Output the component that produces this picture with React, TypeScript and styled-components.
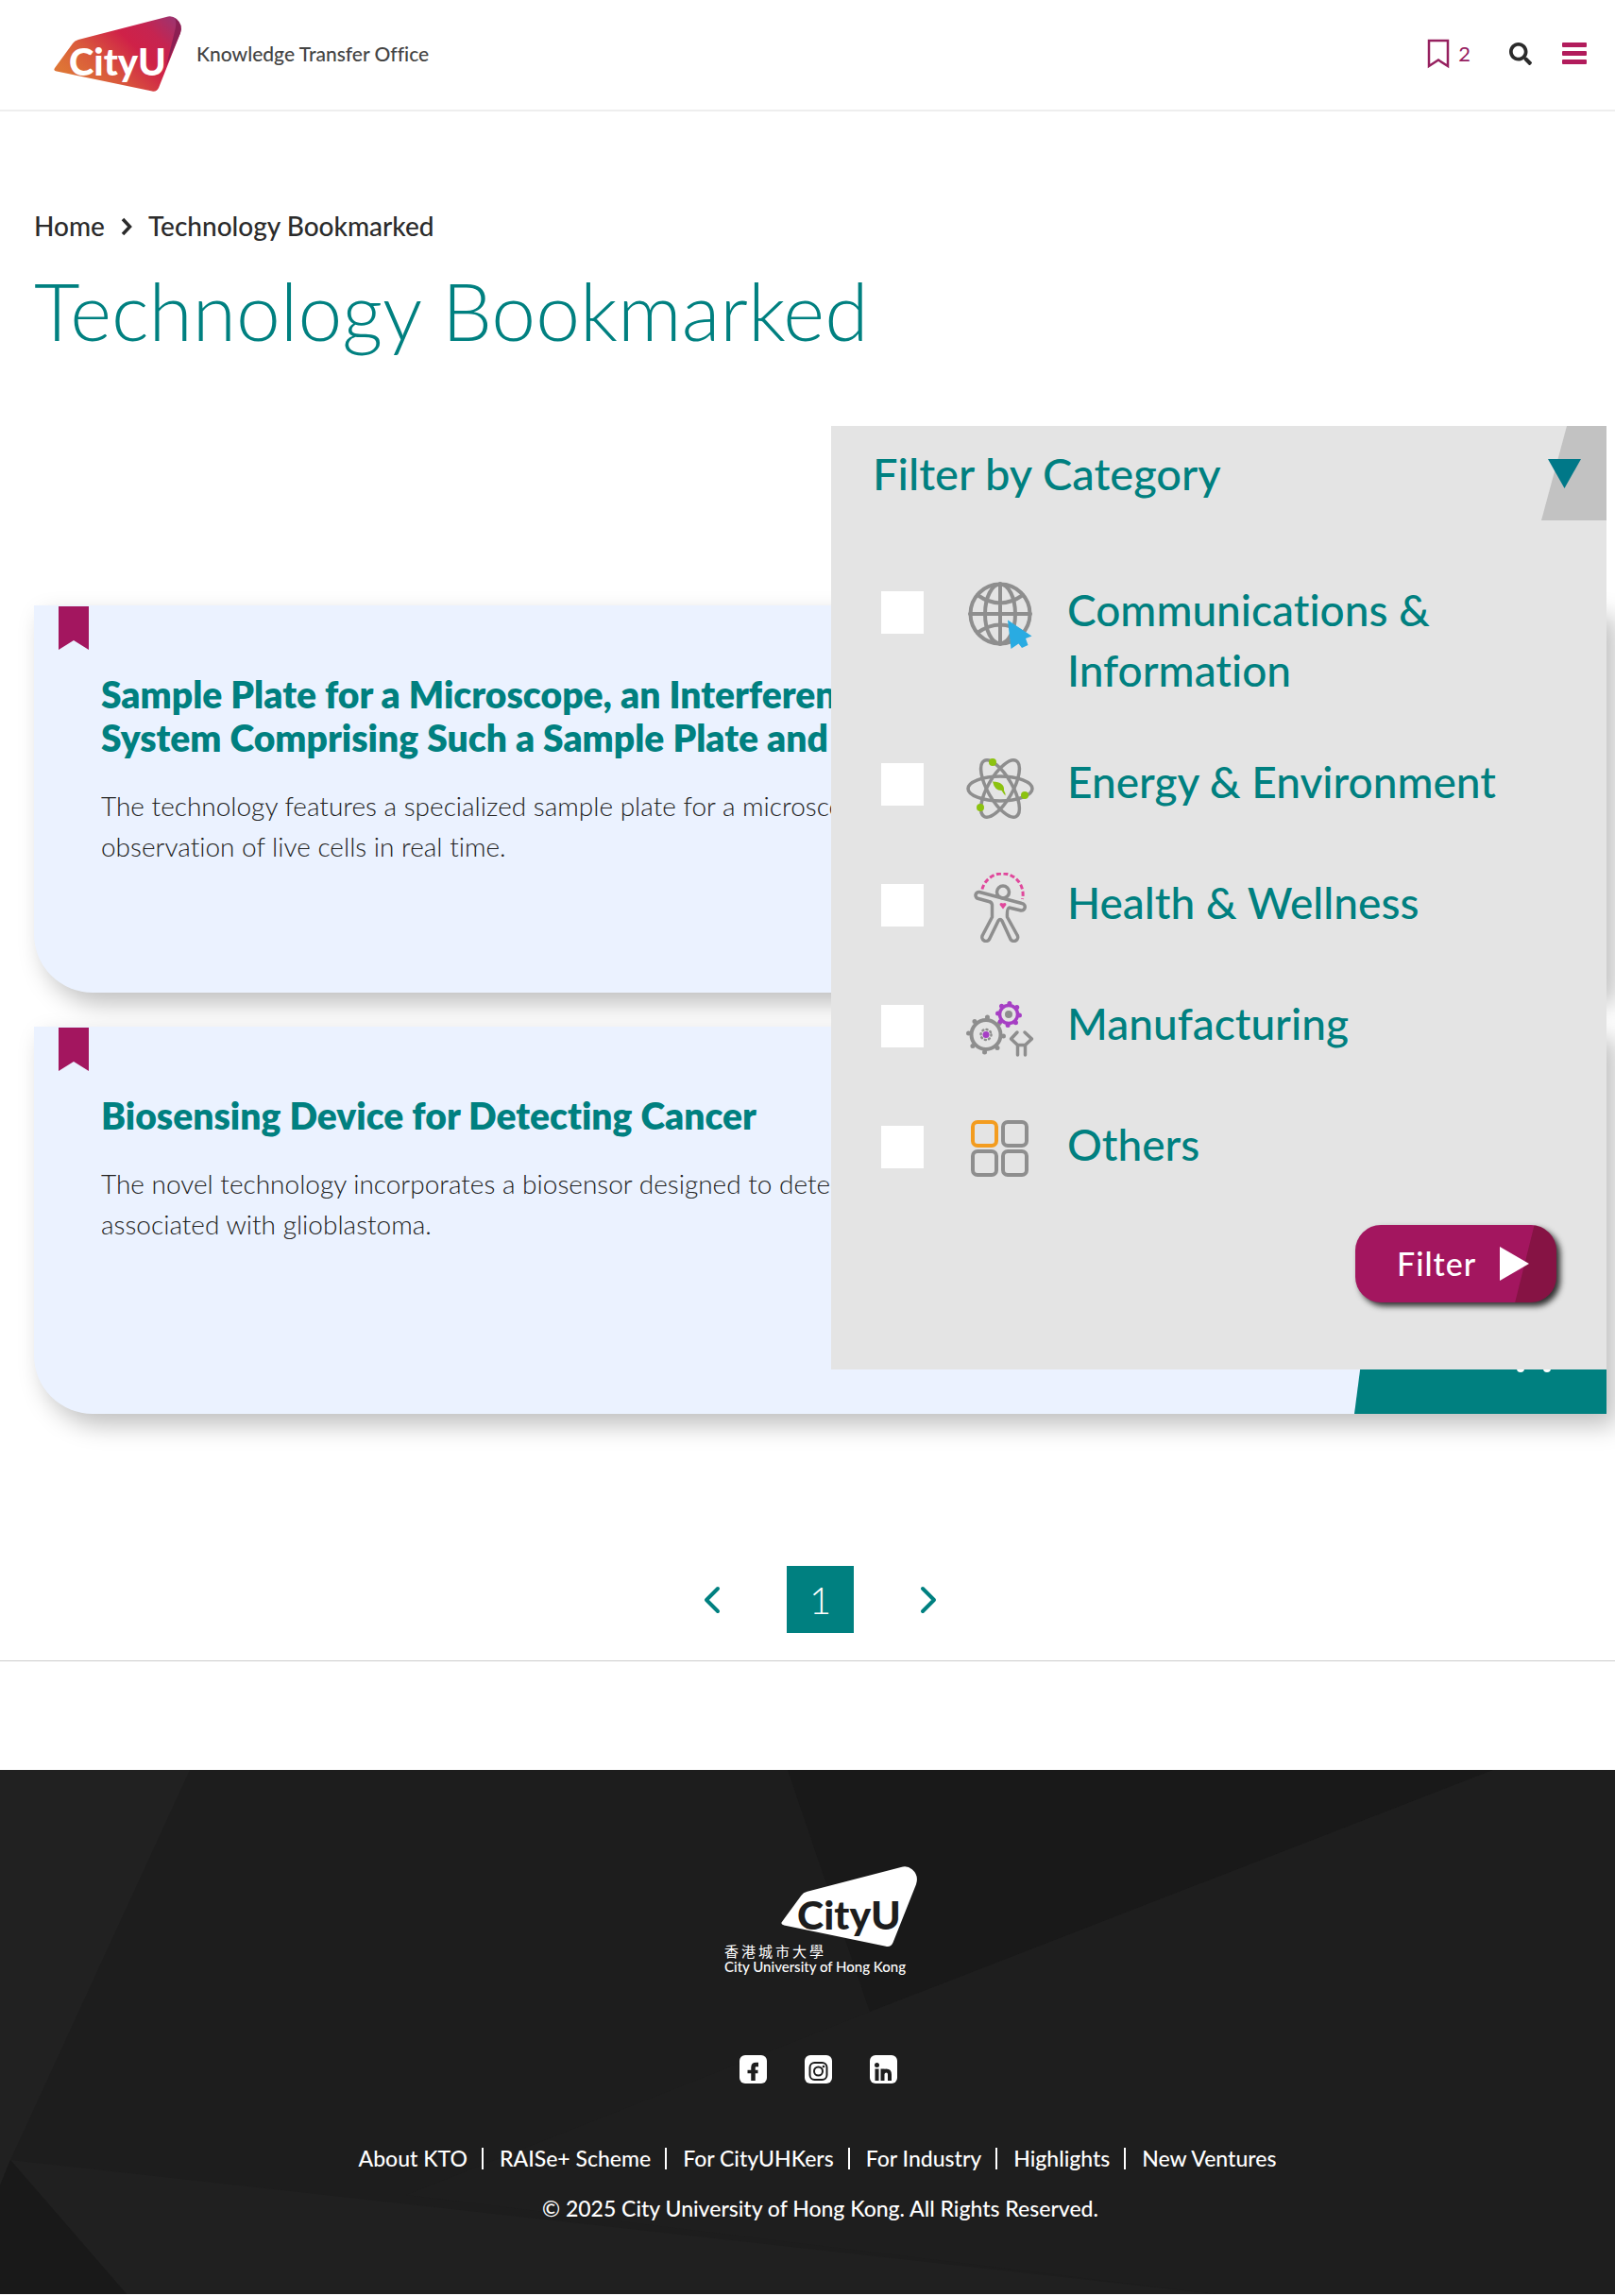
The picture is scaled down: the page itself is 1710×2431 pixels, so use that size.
import React from "react";
import styled, { createGlobalStyle } from "styled-components";
import { FaSearch } from "react-icons/fa";

const TEAL = "#008080";
const MAGENTA = "#a3165f";
const FONT = `Lato, "Noto Sans CJK TC", "Liberation Sans", sans-serif`;

const GlobalStyle = createGlobalStyle`
  *, *::before, *::after { box-sizing: border-box; }
  body {
    margin: 0;
    background: #fff;
    font-family: ${FONT};
    font-weight: 500;
    font-variant-ligatures: no-common-ligatures;
    color: #2b2b2b;
  }
  h1, h2, h3, p, ul, ol { margin: 0; padding: 0; }
  ul, ol { list-style: none; }
  a { color: inherit; text-decoration: none; }
  button { border: 0; padding: 0; background: none; font: inherit; color: inherit; cursor: pointer; }
  svg { display: block; }
`;

/* ---------- header ---------- */

const Header = styled.header`
  display: flex;
  align-items: center;
  justify-content: space-between;
  height: 118px;
  padding: 0 30px 2px 57px;
  border-bottom: 2px solid #eeeeee;
`;

const Brand = styled.a`
  display: flex;
  align-items: center;
  gap: 16px;
  font-size: 21px;
  line-height: 26px;
  color: #444;
`;

const Tools = styled.nav`
  display: flex;
  align-items: center;
`;

const BookmarkLink = styled.a`
  display: flex;
  align-items: center;
  gap: 9px;
  margin-right: 41px;
  font-size: 22px;
  line-height: 26px;
  font-weight: 400;
  color: #96205f;
`;

const ToolButton = styled.button`
  display: flex;
  font-size: 24px;
  color: #2b2b2b;
  & + & { margin-left: 32px; }
`;

/* ---------- page body ---------- */

const Main = styled.main`
  padding: 104px 9px 29px 36px;
`;

const Breadcrumb = styled.ol`
  display: flex;
  align-items: center;
  font-size: 28px;
  line-height: 34px;
`;

const Crumb = styled.li`
  display: flex;
  align-items: center;
  gap: 17px;
  margin-right: 17px;
`;

const PageTitle = styled.h1`
  margin-top: 23px;
  font-size: 84px;
  line-height: 100px;
  font-weight: 300;
  color: ${TEAL};
`;

const Results = styled.section`
  position: relative;
  margin-top: 72px;
  padding-top: 190px;
`;

const CardList = styled.ul`
  display: grid;
  gap: 36px;
`;

const Card = styled.li`
  position: relative;
  min-height: 410px;
  padding: 71px;
  border-bottom-left-radius: 62px;
  background: #ebf2ff;
  box-shadow: 10px 12px 26px rgba(0, 0, 0, 0.25);
`;

const Ribbon = styled.button`
  position: absolute;
  top: 1px;
  left: 26px;
`;

const CardTitle = styled.h2`
  font-size: 39px;
  line-height: 46px;
  font-weight: 800;
  color: ${TEAL};
`;

const CardText = styled.p`
  margin-top: 28px;
  font-size: 28px;
  line-height: 43px;
  font-weight: 300;
  color: #222;
`;

const CardAction = styled.a`
  position: absolute;
  right: 0;
  bottom: 0;
  display: flex;
  align-items: flex-end;
  justify-content: flex-end;
  width: 267px;
  height: 92px;
  padding: 0 58px 44px 0;
  background: ${TEAL};
  clip-path: polygon(12px 0, 100% 0, 100% 100%, 0 100%);
`;

/* ---------- filter panel ---------- */

const Panel = styled.form`
  position: absolute;
  top: 0;
  right: 0;
  width: 821px;
  max-width: 100%;
  padding-bottom: 71px;
  background: #e4e4e4;
  color: ${TEAL};
`;

const PanelHead = styled.div`
  display: flex;
  align-items: center;
  justify-content: space-between;
  height: 100px;
  padding-left: 44px;
`;

const PanelTitle = styled.h2`
  font-size: 47px;
  line-height: 56px;
  font-weight: 500;
`;

const Options = styled.ul`
  display: grid;
  gap: 54px;
  padding: 63px 53px 0;
`;

const Option = styled.label`
  display: grid;
  grid-template-columns: 45px 74px 1fr;
  column-gap: 44px;
  align-items: start;
  min-height: 74px;
  font-size: 46px;
  line-height: 64px;
`;

const OptionName = styled.span`
  margin-left: -10px;
`;

const Check = styled.input`
  appearance: none;
  width: 45px;
  height: 45px;
  margin: 12px 0 0;
  background: #fff;
  &:checked { box-shadow: inset 0 0 0 10px ${TEAL}; }
`;

const Submit = styled.button`
  display: flex;
  align-items: center;
  justify-content: space-between;
  width: 213px;
  height: 82px;
  margin: 43px 53px 0 auto;
  padding: 0 29px 0 44px;
  border-radius: 27px;
  background: linear-gradient(104deg, transparent 81%, #861344 81.4%), ${MAGENTA};
  box-shadow: 4px 4px 6px rgba(0, 0, 0, 0.8);
  font-size: 34px;
  line-height: 40px;
  letter-spacing: 1px;
  color: #fff;
`;

/* ---------- pagination ---------- */

const Pager = styled.nav`
  display: flex;
  align-items: center;
  justify-content: center;
  gap: 70px;
  margin-top: 161px;
`;

const PageNumber = styled.a`
  display: flex;
  align-items: center;
  justify-content: center;
  width: 71px;
  height: 71px;
  background: ${TEAL};
  color: #fff;
  font-size: 40px;
  line-height: 48px;
  font-weight: 300;
`;

const Divider = styled.hr`
  margin: 0 0 115px;
  border: 0;
  border-top: 1px solid #ccc;
`;

/* ---------- footer ---------- */

const Footer = styled.footer`
  position: relative;
  display: flex;
  flex-direction: column;
  align-items: center;
  padding: 102px 9px 77px 36px;
  margin-bottom: 2px;
  background: #1d1d1d;
  color: #fff;
  font-size: 23px;
  line-height: 28px;
`;

const Facets = styled.svg`
  position: absolute;
  inset: 0;
  width: 100%;
  height: 100%;
`;

const Lockup = styled.a`
  position: relative;
`;

const Social = styled.ul`
  position: relative;
  display: flex;
  gap: 40px;
  margin: 82px 4px 65px 0;
`;

const SocialLink = styled.a`
  display: block;
  width: 29px;
  height: 30px;
  border-radius: 6px;
  background: #fff;
  color: #1d1d1d;
`;

const FooterLinks = styled.ul`
  position: relative;
  display: flex;
  margin-right: 6px;
`;

const FooterItem = styled.li`
  display: flex;
  align-items: center;
  & + & { padding-left: 17px; }
  &:not(:last-child)::after {
    content: "";
    width: 2px;
    height: 23px;
    margin-left: 15px;
    background: #fff;
  }
`;

const Copyright = styled.p`
  position: relative;
  margin-top: 25px;
`;

/* ---------- drawings ---------- */

const SHIELD =
  "M1 55L20 29Q22 26 26 25L119 1Q125 -1 130 3Q137 9 134 18L111 76Q109 80.500 104 79.500L3 58.500Q-1 57.500 1 55Z";

const Shield = ({ fill, ink, fold }: { fill: string; ink: string; fold?: boolean }) => (
  <>
    <path d={SHIELD} fill={fill} />
    {fold && <path d="M128 2Q130 6 129 12L119 53L134 18Q137 9 128 2Z" fill="#8c1f52" />}
    <text x="16" y="63" fontFamily="Lato, sans-serif" fontWeight="900" fontSize="40" fill={ink}>
      CityU
    </text>
  </>
);

const HeaderLogo = () => (
  <svg width="135" height="80" viewBox="0 0 135 80" overflow="visible" aria-hidden="true">
    <defs>
      <linearGradient id="shield" x1="0" y1="0.700" x2="1" y2="0.100">
        <stop offset="0.050" stopColor="#de7436" />
        <stop offset="0.300" stopColor="#d9583c" />
        <stop offset="0.600" stopColor="#cf2148" />
        <stop offset="0.780" stopColor="#c62450" />
        <stop offset="1" stopColor="#9c3470" />
      </linearGradient>
    </defs>
    <Shield fill="url(#shield)" ink="#fff" fold />
  </svg>
);

const FooterLogo = () => (
  <svg width="204" height="118" viewBox="0 0 204 118" aria-label="City University of Hong Kong">
    <g transform="translate(60 0) scale(1.067)">
      <Shield fill="#fff" ink="#1d1d1d" />
    </g>
    <text x="0" y="96" fontFamily='"Noto Sans CJK TC", sans-serif' fontWeight="400" fontSize="15" letterSpacing="3" fill="#fff">
      香港城市大學
    </text>
    <text x="0" y="112" fontFamily="Lato, sans-serif" fontWeight="500" fontSize="15" fill="#fff">
      City University of Hong Kong
    </text>
  </svg>
);

const GREY = { fill: "none", stroke: "#8e8e8e", strokeWidth: 4, strokeLinecap: "round", strokeLinejoin: "round" } as const;

const OptionIcon = ({ children }: { children: React.ReactNode }) => (
  <svg width="74" height="74" viewBox="0 0 74 74" aria-hidden="true">
    {children}
  </svg>
);

const Globe = () => (
  <OptionIcon>
    <g {...GREY}>
      <circle cx="37" cy="36" r="31.500" />
      <ellipse cx="37" cy="36" rx="16" ry="31.500" />
      <path d="M37 4V68M5 36H69M13 16Q37 33 61 16M13 56Q37 39 61 56" />
    </g>
    <path d="M45 42.500L70.500 59.500L64 62L66.500 69L60 72L56.500 67.500L48.500 73Z" fill="#29abe2" />
  </OptionIcon>
);

const Atom = () => (
  <OptionIcon>
    <g {...GREY} strokeWidth="3.500">
      <ellipse cx="37" cy="39" rx="34" ry="13" />
      <ellipse cx="37" cy="39" rx="34" ry="13" transform="rotate(60 37 39)" />
      <ellipse cx="37" cy="39" rx="34" ry="13" transform="rotate(120 37 39)" />
    </g>
    <g fill="#8cc210">
      <circle cx="29" cy="11" r="4" />
      <circle cx="16" cy="59" r="4" />
      <circle cx="63" cy="46" r="4" />
      <path d="M29 31.500Q42 32 41 41Q43 44 42.500 46.500L40.500 44L38.500 41Q31 41 29 31.500Z" />
    </g>
  </OptionIcon>
);

const Person = () => (
  <OptionIcon>
    <path d="M18 17.500A21.500 21.500 0 0 1 60.500 28" fill="none" stroke="#e0479b" strokeWidth="3" strokeDasharray="5 2.500" />
    <g {...GREY} strokeWidth="3.500">
      <circle cx="40" cy="20.500" r="6.500" />
      <path d="M15 20.500L60 32.500A3.500 3.500 0 0 1 59 40L46.500 37Q44 38 44.500 47L55 66A3.800 3.800 0 0 1 48 70.500L39 51Q37 48 35 51L25.500 70.500A3.800 3.800 0 0 1 18.500 66L28.500 47V34Q28 31 25 30.500L14 27.500A3.500 3.500 0 0 1 15 20.500Z" />
    </g>
    <path d="M40 38.500L36.500 34Q36.500 31 40 32.500Q43.500 31 43.500 34Z" fill="#e0479b" />
  </OptionIcon>
);

const teeth = (cx: number, cy: number, r: number, count: number) =>
  Array.from({ length: count }, (_, i) => {
    const a = ((i + 0.1) / count) * Math.PI * 2;
    return <circle key={i} cx={cx + Math.cos(a) * r} cy={cy + Math.sin(a) * r} r="2.500" />;
  });

const Gears = () => (
  <OptionIcon>
    <g {...GREY}>
      <circle cx="22" cy="43.500" r="15.500" />
      <circle cx="22" cy="43.500" r="5.500" strokeWidth="2.500" strokeDasharray="1 3.300" />
      <path d="M55 41L48.500 48L55.500 54.500H63.500L70.500 48L63 41M55.500 55V65M63.500 55V65" strokeWidth="3.500" />
    </g>
    <g fill="#8e8e8e">
      {teeth(22, 43.5, 18.5, 8)}
      <circle cx="46" cy="22" r="4" />
    </g>
    <circle cx="22" cy="43.500" r="3.500" fill="#a63fc4" />
    <circle cx="46" cy="22" r="9.500" fill="none" stroke="#a63fc4" strokeWidth="3.500" />
    <g fill="#a63fc4">{teeth(46, 22, 11.5, 8)}</g>
  </OptionIcon>
);

const Squares = () => (
  <OptionIcon>
    <g {...GREY}>
      <rect x="8" y="8" width="25" height="25" rx="5" stroke="#f39c1f" />
      <rect x="40" y="8" width="25" height="25" rx="5" />
      <rect x="8" y="39" width="25" height="25" rx="5" />
      <rect x="40" y="39" width="25" height="25" rx="5" />
    </g>
  </OptionIcon>
);

const Arrow = ({ flip }: { flip?: boolean }) => (
  <svg width="18" height="30" viewBox="0 0 18 30" fill="none" stroke={TEAL} strokeWidth="4" strokeLinecap="round" strokeLinejoin="round" aria-hidden="true">
    <path d={flip ? "M3 3L15 15L3 27" : "M15 3L3 15L15 27"} />
  </svg>
);

/* ---------- data ---------- */

const categories = [
  { id: "communications", name: "Communications & Information", Icon: Globe },
  { id: "energy", name: "Energy & Environment", Icon: Atom },
  { id: "health", name: "Health & Wellness", Icon: Person },
  { id: "manufacturing", name: "Manufacturing", Icon: Gears },
  { id: "others", name: "Others", Icon: Squares },
];

const technologies = [
  {
    title: ["Sample Plate for a Microscope, an Interference", "System Comprising Such a Sample Plate and"],
    text: ["The technology features a specialized sample plate for a microscope", "observation of live cells in real time."],
  },
  {
    title: ["Biosensing Device for Detecting Cancer"],
    text: ["The novel technology incorporates a biosensor designed to detect", "associated with glioblastoma."],
  },
];

const footerLinks = ["About KTO", "RAISe+ Scheme", "For CityUHKers", "For Industry", "Highlights", "New Ventures"];

const Lines = ({ items }: { items: string[] }) => (
  <>
    {items.map((line, i) => (
      <React.Fragment key={line}>
        {i > 0 && <br />}
        {line}
      </React.Fragment>
    ))}
  </>
);

export default function App() {
  return (
    <>
      <GlobalStyle />
      <Header>
        <Brand href="#">
          <HeaderLogo />
          Knowledge Transfer Office
        </Brand>
        <Tools>
          <BookmarkLink href="#" aria-label="2 bookmarks">
            <svg width="24" height="32" viewBox="0 0 24 32" fill="none" stroke="#96205f" strokeWidth="2.500" aria-hidden="true">
              <path d="M2 2H22V29L12 22.500L2 29Z" />
            </svg>
            2
          </BookmarkLink>
          <ToolButton type="button" aria-label="Search">
            <FaSearch />
          </ToolButton>
          <ToolButton type="button" aria-label="Menu">
            <svg width="26" height="24" viewBox="0 0 26 24" fill="#b21c5c" aria-hidden="true">
              <rect y="0" width="26" height="5" rx="1" />
              <rect y="9" width="26" height="5" rx="1" />
              <rect y="18" width="26" height="5" rx="1" />
            </svg>
          </ToolButton>
        </Tools>
      </Header>

      <Main>
        <Breadcrumb>
          <Crumb>
            <a href="#">Home</a>
            <svg width="12" height="20" viewBox="0 0 12 20" fill="none" stroke="#2b2b2b" strokeWidth="3.500" aria-hidden="true">
              <path d="M2 3L9.500 11L2 19" />
            </svg>
          </Crumb>
          <li>Technology Bookmarked</li>
        </Breadcrumb>
        <PageTitle>Technology Bookmarked</PageTitle>

        <Results>
          <CardList>
            {technologies.map((tech, i) => (
              <Card key={i}>
                <Ribbon type="button" aria-label="Remove bookmark">
                  <svg width="32" height="46" viewBox="0 0 32 46" fill={MAGENTA} aria-hidden="true">
                    <path d="M0 0H32V46L16 36L0 46Z" />
                  </svg>
                </Ribbon>
                <CardTitle>
                  <Lines items={tech.title} />
                </CardTitle>
                <CardText>
                  <Lines items={tech.text} />
                </CardText>
                <CardAction href="#" aria-label="Details">
                  <svg width="38" height="8" viewBox="0 0 38 8" fill="#fff" aria-hidden="true">
                    <circle cx="5" cy="4" r="4" />
                    <circle cx="33" cy="4" r="4" />
                  </svg>
                </CardAction>
              </Card>
            ))}
          </CardList>

          <Panel onSubmit={(e) => e.preventDefault()}>
            <PanelHead>
              <PanelTitle>Filter by Category</PanelTitle>
              <button type="button" aria-label="Toggle filter">
                <svg width="69" height="100" viewBox="0 0 69 100" aria-hidden="true">
                  <path d="M27 0H69V100H0Z" fill="#c2c2c2" />
                  <path d="M7 35H42L24.500 66Z" fill="#007888" />
                </svg>
              </button>
            </PanelHead>
            <Options>
              {categories.map(({ id, name, Icon }) => (
                <li key={id}>
                  <Option htmlFor={id}>
                    <Check type="checkbox" id={id} />
                    <Icon />
                    <OptionName>{name}</OptionName>
                  </Option>
                </li>
              ))}
            </Options>
            <Submit type="submit">
              Filter
              <svg width="31" height="36" viewBox="0 0 31 36" fill="#fff" aria-hidden="true">
                <path d="M0 0L31 18L0 36Z" />
              </svg>
            </Submit>
          </Panel>
        </Results>

        <Pager aria-label="Pagination">
          <button type="button" aria-label="Previous page">
            <Arrow />
          </button>
          <PageNumber href="#" aria-current="page">
            1
          </PageNumber>
          <button type="button" aria-label="Next page">
            <Arrow flip />
          </button>
        </Pager>
      </Main>
      <Divider />

      <Footer>
        <Facets viewBox="0 0 1710 555" preserveAspectRatio="none" aria-hidden="true">
          <path d="M0 0H201L11 413L0 440Z" fill="#212121" />
          <path d="M834 0H1581L921 256Z" fill="#191919" />
          <path d="M1581 0H1710V555H1287L430 450L921 256Z" fill="#1e1e1e" />
          <path d="M11 413L1287 555H134Z" fill="#202020" />
          <path d="M0 440L11 413L134 555H0Z" fill="#191919" />
        </Facets>
        <Lockup href="#">
          <FooterLogo />
        </Lockup>
        <Social>
          <li>
            <SocialLink href="#" aria-label="Facebook">
              <svg width="29" height="30" viewBox="0 0 29 30" fill="none" stroke="currentColor" strokeWidth="4.500" aria-hidden="true">
                <path d="M20 10H17.500Q14.500 10 14.500 13V27" />
                <path d="M8.500 17.500H19.500" strokeWidth="3.500" />
              </svg>
            </SocialLink>
          </li>
          <li>
            <SocialLink href="#" aria-label="Instagram">
              <svg width="29" height="30" viewBox="0 0 29 30" fill="none" stroke="currentColor" strokeWidth="2" aria-hidden="true">
                <rect x="5.500" y="8" width="18" height="18" rx="5" />
                <circle cx="14.500" cy="17" r="4.500" />
                <circle cx="20" cy="12" r="1.300" fill="currentColor" stroke="none" />
              </svg>
            </SocialLink>
          </li>
          <li>
            <SocialLink href="#" aria-label="LinkedIn">
              <svg width="29" height="30" viewBox="0 0 29 30" fill="none" stroke="currentColor" strokeWidth="4" aria-hidden="true">
                <circle cx="7.500" cy="10.500" r="2.500" fill="currentColor" stroke="none" />
                <path d="M7.500 14.500V27M13.500 14.500V27M13.500 20Q14 16.500 17.500 16.500Q21 16.500 21 20.500V27" />
              </svg>
            </SocialLink>
          </li>
        </Social>
        <FooterLinks>
          {footerLinks.map((name) => (
            <FooterItem key={name}>
              <a href="#">{name}</a>
            </FooterItem>
          ))}
        </FooterLinks>
        <Copyright>© 2025 City University of Hong Kong. All Rights Reserved.</Copyright>
      </Footer>
    </>
  );
}
